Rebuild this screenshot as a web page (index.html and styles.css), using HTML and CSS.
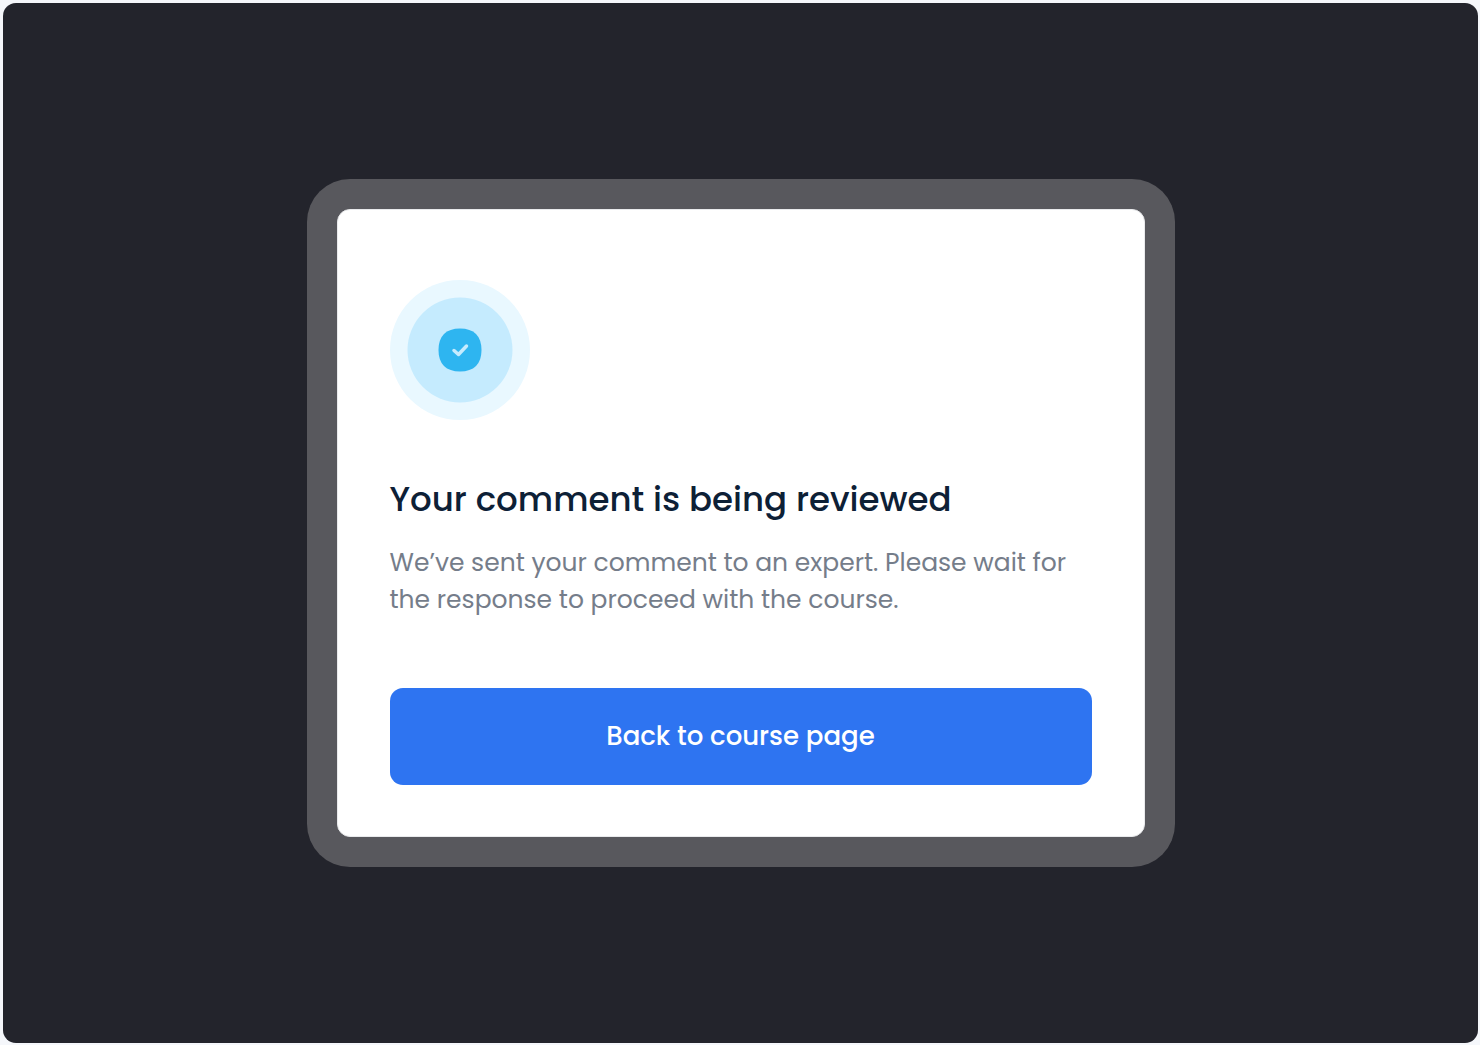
FILE: index.html
```html
<!DOCTYPE html>
<html lang="en">
<head>
    <meta charset="UTF-8">
    <meta name="viewport" content="width=device-width, initial-scale=1.0">
    <title>Comment review</title>
    <link rel="stylesheet" href="styles.css">
</head>
<body>
    <main class="stage">
        <div class="frame">
            <section class="card">
                <svg class="status-icon" viewBox="0 0 140 140" aria-hidden="true">
                    <circle cx="70" cy="70" r="70" fill="#e9f8ff"/>
                    <circle cx="70" cy="70" r="52.500" fill="#c5ebfe"/>
                    <path d="M70 48.500C84 48.500 91.500 56 91.500 70S84 91.500 70 91.500 48.500 84 48.500 70 56 48.500 70 48.500Z" fill="#2eb5f0"/>
                    <path d="M64 70.500L68.500 74.500L76.500 66" fill="none" stroke="#c5ebfe" stroke-width="3.500" stroke-linecap="round" stroke-linejoin="round"/>
                </svg>
                <h1>Your comment is being reviewed</h1>
                <p>We’ve sent your comment to an expert. Please wait for the response to proceed with the course.</p>
                <button type="button">Back to course page</button>
            </section>
        </div>
    </main>
</body>
</html>
```
FILE: styles.css
```css
* {
    box-sizing: border-box;
}

body {
    font-family: Poppins, Inter, sans-serif;
    margin: 0;
    padding: 3px 2px 2px 3px;
    display: flex;
    min-height: 100vh;
    background-color: #f5f7fb;
}

.stage {
    flex: 1;
    display: flex;
    justify-content: center;
    align-items: center;
    background-color: #23242c;
    border-radius: 13px;
}

.frame {
    max-width: 868px;
    width: 100%;
    padding: 30px;
    background-color: #58585d;
    border-radius: 43px;
}

.card {
    padding: 70px 52px 51px;
    background-color: #fff;
    border: 1px solid #e9eaec;
    border-radius: 13px;
}

.status-icon {
    display: block;
    width: 140px;
    height: 140px;
}

h1 {
    margin: 53px 0 19px;
    font-size: 34px;
    font-weight: 500;
    line-height: 52px;
    color: #0d2036;
}

p {
    margin: 0 0 70px;
    font-size: 25px;
    line-height: 37px;
    color: #757d8a;
}

button {
    display: block;
    width: 100%;
    padding: 30px;
    background-color: #2e74f1;
    color: #fff;
    border: none;
    border-radius: 13px;
    font-family: inherit;
    font-size: 26px;
    font-weight: 500;
    line-height: 37px;
    cursor: pointer;
}

button:hover {
    background-color: #215fd0;
}
```
